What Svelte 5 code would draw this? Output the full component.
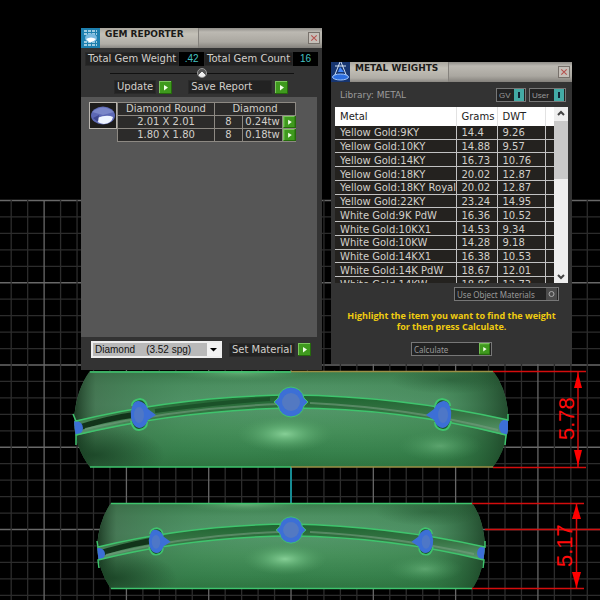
<script>
	const gems = [
		{ size: '2.01 X 2.01', count: 8, weight: '0.24tw' },
		{ size: '1.80 X 1.80', count: 8, weight: '0.18tw' }
	];

	const metals = [
		['Yellow Gold:9KY', '14.4', '9.26'],
		['Yellow Gold:10KY', '14.88', '9.57'],
		['Yellow Gold:14KY', '16.73', '10.76'],
		['Yellow Gold:18KY', '20.02', '12.87'],
		['Yellow Gold:18KY Royal', '20.02', '12.87'],
		['Yellow Gold:22KY', '23.24', '14.95'],
		['White Gold:9K PdW', '16.36', '10.52'],
		['White Gold:10KX1', '14.53', '9.34'],
		['White Gold:10KW', '14.28', '9.18'],
		['White Gold:14KX1', '16.38', '10.53'],
		['White Gold:14K PdW', '18.67', '12.01'],
		['White Gold:14KW', '18.86', '12.73']
	];

	let material = $state('diamond');
	let zoom = $state(50);

	// every fifth grid line is a major one
	const columns = Array.from({ length: 37 }, (_, i) => ({ at: 11.2 + i * 16.46, major: i % 5 === 2 }));
	const rows = Array.from({ length: 25 }, (_, i) => ({ at: 200.5 + i * 16.45, major: i % 5 === 0 }));
</script>

{#snippet play()}
	<svg class="play" viewBox="0 0 13 13" aria-hidden="true">
		<rect width="13" height="13" fill="#3f9a1e" />
		<path d="M0 13V0H13" fill="none" stroke="#7cc45e" stroke-width="2" />
		<path d="M13 0V13H0" fill="none" stroke="#256a0c" stroke-width="2" />
		<path d="M5 4L9 6.5L5 9.5Z" fill="#f2ffe9" />
	</svg>
{/snippet}

{#snippet close()}
	<button class="close" aria-label="Close">
		<svg viewBox="0 0 11 11"><path d="M2.5 2.5L8.5 8.5M8.5 2.5L2.5 8.5" stroke="#b5524e" stroke-width="1.2" /></svg>
	</button>
{/snippet}

{#snippet sideGem()}
	<path class="seat" d="M-7 -8Q-7 -14 1 -15Q8 -14 8 -6M-8 7Q-6 16 0 16Q8 15 8 8" />
	<path class="gem" d="M-7 -7Q-5 -14 0 -13Q6 -12 9 -5L17 1L9 6Q6 14 0 14Q-6 13 -8 4Q-9 -2 -7 -7Z" />
	<ellipse cx="0" cy="1" rx="5" ry="8" fill="#5a7dbd" opacity=".6" />
{/snippet}

{#snippet frontGem()}
	<path class="gem seat" d="M-17 0L-13 -4Q-11 -14 0 -15Q11 -14 13 -4L17 0L13 4Q11 14 0 15Q-11 14 -13 4Z" />
	<circle r="9" fill="#6380b4" opacity=".6" />
{/snippet}

<main>
	<svg class="viewport" viewBox="0 0 600 600" preserveAspectRatio="xMidYMid slice" role="img" aria-label="Two rings with dimensions">
		<defs>
			<linearGradient id="band" x1="0" y1="0" x2="0" y2="1">
				<stop offset="0" stop-color="#3a7b4b" />
				<stop offset=".15" stop-color="#4d9062" />
				<stop offset=".35" stop-color="#55976c" />
				<stop offset=".6" stop-color="#47905b" />
				<stop offset=".85" stop-color="#36804b" />
				<stop offset="1" stop-color="#2d733f" />
			</linearGradient>
			<linearGradient id="edges">
				<stop offset="0" stop-color="#16301c" stop-opacity=".9" />
				<stop offset=".05" stop-color="#3d6547" stop-opacity=".6" />
				<stop offset=".25" stop-color="#35764a" stop-opacity=".15" />
				<stop offset=".5" stop-color="#4a9a60" stop-opacity="0" />
				<stop offset=".85" stop-color="#2f7040" stop-opacity=".2" />
				<stop offset="1" stop-color="#173a20" stop-opacity=".8" />
			</linearGradient>
			<linearGradient id="groove" x1="0" y1="0" x2="0" y2="1">
				<stop offset="0" stop-color="#1e6430" />
				<stop offset=".5" stop-color="#397546" />
				<stop offset="1" stop-color="#5d9a70" />
			</linearGradient>
			<radialGradient id="shine">
				<stop offset="0" stop-color="#86cf96" />
				<stop offset=".4" stop-color="#68b67b" stop-opacity=".7" />
				<stop offset="1" stop-color="#4f9a62" stop-opacity="0" />
			</radialGradient>
			<radialGradient id="shade">
				<stop offset="0" stop-color="#123a1d" stop-opacity=".7" />
				<stop offset="1" stop-color="#123a1d" stop-opacity="0" />
			</radialGradient>
			<clipPath id="upper-band"><path d="M90 371H493Q505 386 508 411V430Q504 453 493 467H90Q75 448 74 420Q76 390 90 371Z" /></clipPath>
			<clipPath id="lower-band"><path d="M111 503H472Q483 518 485 544Q484 572 472 589H111Q98 570 97 546Q99 520 111 503Z" /></clipPath>
		</defs>

		{#each rows as row}
			<path class="grid" class:major={row.major} d="M0 {row.at}H600" />
		{/each}
		{#each columns as column}
			<path class="grid" class:major={column.major} d="M{column.at} 200V600" />
		{/each}
		<path d="M291 467V503" stroke="#168b93" stroke-width="2" />

		<g clip-path="url(#upper-band)">
			<rect x="74" y="371" width="434" height="96" fill="url(#band)" />
			<rect x="74" y="371" width="434" height="96" fill="url(#edges)" />
			<ellipse cx="95" cy="455" rx="70" ry="30" fill="url(#shade)" />
			<ellipse cx="450" cy="380" rx="60" ry="14" fill="url(#shade)" opacity=".5" />
			<ellipse cx="240" cy="372" rx="70" ry="9" fill="url(#shine)" opacity=".6" />
			<ellipse cx="285" cy="434" rx="48" ry="18" fill="url(#shine)" />
			<ellipse cx="440" cy="446" rx="42" ry="15" fill="url(#shine)" opacity=".45" />
			<path d="M74 421Q180 396 291 395Q400 396 508 420V436Q400 408 291 408Q180 410 74 436Z" fill="url(#groove)" />
			<path d="M74 426Q104 416 140 411V417Q100 422 76 432Z" fill="#12331a" />
			<path d="M155 411Q220 402 270 399" stroke="#1b5229" stroke-width="4" fill="none" />
			<path d="M85 429Q180 408 280 404M310 403Q410 408 498 430" stroke="#759c7e" stroke-width="2" fill="none" opacity=".6" />
			<circle cx="76" cy="428" r="7" class="gem" />
			<circle cx="507" cy="427" r="8" class="gem" />
		</g>
		<path class="outline" d="M90 372H291M90 467H291" stroke-width="2" />
		<path class="outline" d="M73 414L76 421Q180 396 291 395Q400 396 508 420V414M76 445V435Q180 410 291 408Q400 408 506 435L505 445" />
		<path d="M291 371.5H493M291 467H493" stroke="#9b8f45" stroke-width="1.5" />
		<g transform="translate(291 402)">{@render frontGem()}</g>
		<g transform="translate(139 414)">{@render sideGem()}</g>
		<g transform="translate(443 414) scale(-1 1)">{@render sideGem()}</g>

		<g clip-path="url(#lower-band)">
			<rect x="97" y="503" width="388" height="86" fill="url(#band)" />
			<rect x="97" y="503" width="388" height="86" fill="url(#edges)" />
			<ellipse cx="115" cy="578" rx="62" ry="28" fill="url(#shade)" />
			<ellipse cx="430" cy="512" rx="55" ry="14" fill="url(#shade)" opacity=".5" />
			<ellipse cx="245" cy="504" rx="65" ry="8" fill="url(#shine)" opacity=".6" />
			<ellipse cx="285" cy="559" rx="42" ry="16" fill="url(#shine)" />
			<ellipse cx="425" cy="569" rx="38" ry="13" fill="url(#shine)" opacity=".45" />
			<path d="M97 547Q190 525 291 524Q390 526 485 547V560Q390 537 291 536Q190 537 97 560Z" fill="url(#groove)" />
			<path d="M97 551Q120 544 150 538V544Q120 549 99 557Z" fill="#12331a" />
			<path d="M106 555Q190 535 280 532M310 532Q390 536 474 554" stroke="#759c7e" stroke-width="2" fill="none" opacity=".6" />
			<circle cx="99" cy="554" r="6" class="gem" />
			<circle cx="484" cy="553" r="7" class="gem" />
		</g>
		<path class="outline" d="M111 503.5H472M111 588.5H472" />
		<path class="outline" d="M97 541L98 547Q190 525 291 524Q390 526 485 547V541M99 568L98 560Q190 537 291 536Q390 537 484 560L483 568" />
		<g transform="translate(291 530) scale(.88)">{@render frontGem()}</g>
		<g transform="translate(156 541) scale(.86)">{@render sideGem()}</g>
		<g transform="translate(426 541) scale(-.86 .86)">{@render sideGem()}</g>

		<g class="dimension">
			<path d="M493 371.5H586M493 467.5H586M578 372V467" />
			<path d="M472 503.5H584M472 588.5H584M576.5 504V588M485 529.5H600" />
			<path class="head" d="M578 373L582 388H574ZM578 466L574 450H582ZM576.5 504L581 519H572ZM576.5 588L572 572H581Z" />
			<text transform="translate(574 440) rotate(-90)">5.78</text>
			<text transform="translate(572 567) rotate(-90)">5.17</text>
		</g>
	</svg>

	<section class="window reporter">
		<header>
			<svg class="logo" viewBox="0 0 19 20" aria-hidden="true">
				<rect width="19" height="20" fill="#1d7fae" />
				<path d="M3 3H16M3 6H16M3 14H16M3 17H16" stroke="#c9e6f2" stroke-width="1.5" stroke-dasharray="3 1" />
				<ellipse cx="10" cy="10" rx="6" ry="4.5" fill="#78b9df" />
				<path d="M5 11Q10 8 15 11Q12 15 8 14Z" fill="#fff" />
			</svg>
			<h2>GEM REPORTER</h2>
			{@render close()}
		</header>
		<div class="totals">
			<span class="plate">Total Gem Weight</span><output>.42</output>
			<span class="plate count">Total Gem Count</span><output>16</output>
		</div>
		<input class="slider" type="range" min="0" max="100" bind:value={zoom} aria-label="Panel split" />
		<div class="actions">
			<button class="action"><span class="plate">Update</span>{@render play()}</button>
			<button class="action wide"><span class="plate">Save Report</span>{@render play()}</button>
		</div>
		<div class="panel">
			<svg class="stone" viewBox="0 0 28 27" role="img" aria-label="Round diamond">
				<rect x=".5" y=".5" width="27" height="26" fill="#1d1c1b" stroke="#b8b4ae" />
				<ellipse cx="14" cy="13.5" rx="12" ry="9" fill="#5d68b5" />
				<path d="M3 10Q14 1 25 10L14 13Z" fill="#7a86c8" />
				<path d="M8 16Q18 12 24 15Q23 21 15 22Q9 21 8 19Z" fill="#eef4ff" />
				<path d="M4 16L10 13L9 20Z" fill="#3e478f" />
			</svg>
			<table class="gems">
				<colgroup><col class="size" /><col class="qty" /><col class="tw" /><col class="go" /></colgroup>
				<thead>
					<tr><th>Diamond Round</th><th colspan="3">Diamond</th></tr>
				</thead>
				<tbody>
					{#each gems as gem}
						<tr>
							<td>{gem.size}</td>
							<td>{gem.count}</td>
							<td>{gem.weight}</td>
							<td class="open"><button aria-label="Open {gem.size}">{@render play()}</button></td>
						</tr>
					{/each}
				</tbody>
			</table>
		</div>
		<footer>
			<div class="picker">
				<select bind:value={material} aria-label="Material">
					<option value="diamond">Diamond &nbsp;&nbsp; (3.52 spg)</option>
				</select>
				<svg viewBox="0 0 13 13" aria-hidden="true"><path d="M3 5H10L6.5 8.5Z" fill="#000" /></svg>
			</div>
			<button class="action"><span class="plate">Set Material</span>{@render play()}</button>
		</footer>
	</section>

	<section class="window weights">
		<header>
			<svg class="logo" viewBox="0 0 19 20" aria-hidden="true">
				<rect width="19" height="20" fill="#17356f" />
				<path d="M9 0L3 15M10 0L16 15M4 4H15" stroke="#d4e3f5" fill="none" />
				<ellipse cx="9.5" cy="15" rx="8" ry="3" fill="#2c6ee0" stroke="#9fc6ff" />
				<path d="M7 10L9 5L13 10Z" fill="#3f86ff" />
			</svg>
			<h2>METAL WEIGHTS</h2>
			{@render close()}
		</header>
		<div class="library">
			<span class="name">Library: METAL</span>
			<button class="toggle">GV<i></i></button>
			<button class="toggle user">User<i></i></button>
		</div>
		<div class="list">
			<div class="clip">
				<table class="metals">
					<colgroup><col /><col class="grams" /><col class="dwt" /><col class="rest" /></colgroup>
					<thead>
						<tr><th>Metal</th><th>Grams</th><th>DWT</th><th></th></tr>
					</thead>
					<tbody>
						{#each metals as [name, grams, dwt]}
							<tr><td>{name}</td><td>{grams}</td><td>{dwt}</td><td></td></tr>
						{/each}
					</tbody>
				</table>
			</div>
			<div class="scrollbar">
				<svg viewBox="0 0 14 14"><path d="M4 8L7 5L10 8" /></svg>
				<div class="thumb"></div>
				<svg viewBox="0 0 14 14"><path d="M4 6L7 9L10 6" /></svg>
			</div>
		</div>
		<button class="boxed objects">
			Use Object Materials
			<svg viewBox="0 0 11 12"><rect width="11" height="12" fill="#4b4b4b" /><circle cx="5.5" cy="6" r="2.5" fill="none" stroke="#aaa" /></svg>
		</button>
		<p>Highlight the item you want to find the weight<br />for then press Calculate.</p>
		<button class="boxed calculate">Calculate {@render play()}</button>
	</section>
</main>

<style>
	:global(body) {
		background: #000;
	}

	main {
		position: relative;
		min-height: 100vh;
		overflow: hidden;
		font-family: 'DejaVu Sans', Verdana, sans-serif;
		font-size: 10px;
		color: #d2cfca;
	}

	button {
		padding: 0;
		border: none;
		background: none;
		color: inherit;
		font: inherit;
	}

	svg {
		display: block;
	}

	.viewport {
		width: 100%;
		height: 100vh;
	}

	.grid {
		stroke: #2c2c2c;
		stroke-width: 1.3;
	}

	.grid.major {
		stroke: #686868;
	}

	.outline {
		fill: none;
		stroke: #3fc46d;
		stroke-width: 1.5;
	}

	.gem {
		fill: #3c6fd6;
	}

	.seat {
		stroke: #3fc46d;
		stroke-width: 1;
	}

	.seat:not(.gem) {
		fill: #1c5029;
		stroke-width: 2;
	}

	.dimension path {
		stroke: #d40d0d;
		stroke-width: 1.5;
	}

	.dimension .head {
		fill: #ff0000;
		stroke: none;
	}

	.dimension text {
		fill: #ff0a0a;
		font-family: 'Liberation Sans', Arial, sans-serif;
		font-size: 22px;
	}

	.window {
		position: absolute;
		width: 241px;
		background: #333;
		box-sizing: border-box;
	}

	.reporter {
		left: 81px;
		top: 28px;
	}

	.weights {
		left: 331px;
		top: 62px;
		padding-bottom: 8px;
	}

	header {
		display: flex;
		height: 20px;
		background: linear-gradient(#8f8d88, #bcb9b2 20%, #aaa7a0 70%, #84817c);
	}

	.logo {
		width: 19px;
		height: 20px;
	}

	h2 {
		width: 99px;
		margin: 0;
		padding-left: 5px;
		box-sizing: border-box;
		border-right: 1px solid #85827d;
		background: linear-gradient(#aaa79f, #c4c1b8 30%, #b0ada6 80%, #8b8883);
		color: #1b1a18;
		font-size: 9px;
		font-weight: bold;
		line-height: 12px;
		white-space: nowrap;
	}

	.close {
		width: 12px;
		height: 12px;
		margin: 4px 2px 0 auto;
		border: 1px solid #77716b;
		background: #c5bfb8;
		box-sizing: border-box;
	}

	.plate {
		padding: 0 2px;
		background: #222;
		border: 1px solid #292929;
		line-height: 12px;
		white-space: nowrap;
	}

	.totals {
		display: flex;
		padding: 4px 4px 0;
		justify-content: space-between;
	}

	output {
		width: 27px;
		background: #000;
		color: #45c1c1;
		font-family: 'Liberation Sans', Arial, sans-serif;
		line-height: 14px;
		text-align: center;
	}

	.slider {
		display: block;
		width: 184px;
		height: 12px;
		margin: 1px auto;
		appearance: none;
		background: linear-gradient(#111, #111) center / 100% 1px no-repeat;
	}

	.slider::-webkit-slider-thumb {
		appearance: none;
		width: 10px;
		height: 10px;
		border: 1px solid #999;
		border-radius: 50%;
		background: conic-gradient(from 135deg at 50% 30%, #eee 90deg, #555 0);
	}

	.actions {
		display: flex;
		gap: 16px;
		padding: 0 34px 3px 33px;
	}

	.action {
		display: flex;
		gap: 3px;
		align-items: center;
	}

	.wide {
		flex: 1;
	}

	.wide .plate {
		flex: 1;
		text-align: left;
	}

	.play {
		width: 13px;
		height: 13px;
		flex: none;
	}

	.panel {
		display: flex;
		align-items: flex-start;
		min-height: 235px;
		margin-right: 5px;
		padding: 5px 0 0 8px;
		background: #565656;
	}

	.stone {
		width: 28px;
		height: 27px;
	}

	table {
		border-collapse: collapse;
		table-layout: fixed;
	}

	.gems {
		width: 179px;
		text-align: center;
	}

	.gems .size {
		width: 97px;
	}

	.gems .qty {
		width: 28px;
	}

	.gems .tw {
		width: 40px;
	}

	.gems th,
	.gems td {
		height: 12px;
		padding: 0;
		border: 1px solid #8d8983;
		background: #2c2b2a;
		font-weight: normal;
		line-height: 12px;
	}

	.open button,
	.open .play {
		display: block;
		height: 12px;
	}

	footer {
		display: flex;
		align-items: center;
		gap: 7px;
		padding: 4px 10px 12px;
	}

	.picker {
		display: flex;
		position: relative;
		width: 131px;
	}

	select {
		width: 100%;
		height: 17px;
		padding: 0 2px;
		appearance: none;
		border: 2px solid #eee;
		border-radius: 0;
		background: #b9b9b9;
		color: #111;
		font-family: 'Liberation Sans', Arial, sans-serif;
		font-size: 10px;
	}

	.picker svg {
		position: absolute;
		top: 2px;
		right: 2px;
		width: 13px;
		height: 13px;
		background: #f2f2f2;
		pointer-events: none;
	}

	.library {
		display: flex;
		gap: 3px;
		padding: 6px 6px 5px 9px;
		align-items: center;
	}

	.name {
		flex: 1;
		color: #9b9b9b;
		font-size: 9px;
	}

	.toggle,
	.boxed {
		display: flex;
		align-items: center;
		justify-content: space-between;
		height: 14px;
		padding: 0 1px 0 2px;
		border: 1px solid #777;
		background: #222;
		box-sizing: border-box;
		color: #999;
		font-size: 8px;
		white-space: nowrap;
	}

	.toggle {
		width: 30px;
		font-family: 'Liberation Sans', Arial, sans-serif;
	}

	.user {
		width: 37px;
	}

	.toggle i {
		width: 2px;
		height: 6px;
		border: solid #43aaa5;
		border-width: 3px 4px;
		background: #123;
	}

	.list {
		display: flex;
		height: 176px;
		margin: 0 4px;
	}

	.clip {
		flex: 1;
		overflow: hidden;
	}

	.metals {
		width: 100%;
		height: 184px;
		background: #24221f;
	}

	.metals .grams {
		width: 41px;
	}

	.metals .dwt {
		width: 48px;
	}

	.metals .rest {
		width: 9px;
	}

	.metals th {
		height: 19px;
		padding: 0 5px;
		background: #fff;
		border-right: 1px solid #e2e2e2;
		color: #222;
		font-weight: normal;
		text-align: left;
	}

	.metals td {
		padding: 2px 5px 0;
		border-bottom: 1px solid #c2c2c2;
		border-right: 1px solid #c2c2c2;
		line-height: 10px;
		white-space: nowrap;
	}

	.metals th:last-child,
	.metals td:last-child {
		padding: 0;
		border-right: none;
	}

	.scrollbar {
		display: flex;
		flex-direction: column;
		width: 14px;
		background: #efefef;
	}

	.scrollbar svg {
		height: 14px;
		fill: none;
		stroke: #444;
		stroke-width: 2;
	}

	.thumb {
		height: 58px;
		margin-bottom: auto;
		background: #c9c9c9;
	}

	.boxed {
		font-family: 'Noto Sans', sans-serif;
	}

	.boxed svg {
		width: 11px;
		height: 12px;
	}

	.objects {
		width: 105px;
		margin: 4px 13px 0 auto;
	}

	p {
		margin: 9px 0 10px;
		color: #f0cc10;
		font-family: 'Open Sans', sans-serif;
		font-size: 9px;
		font-weight: bold;
		line-height: 11px;
		text-align: center;
	}

	.calculate {
		width: 81px;
		margin: 0 auto;
	}
</style>
